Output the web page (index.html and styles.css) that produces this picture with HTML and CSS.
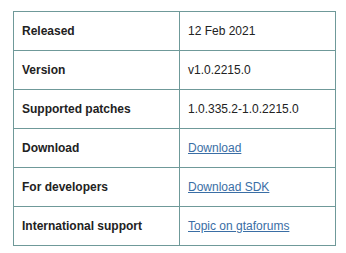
FILE: index.html
```html
<!DOCTYPE html>
<html lang="en">
<head>
    <meta charset="UTF-8">
    <title>Release info</title>
    <link rel="stylesheet" href="styles.css">
</head>
<body>
    <table class="info-table">
        <tr>
            <th>Released</th>
            <td>12 Feb 2021</td>
        </tr>
        <tr>
            <th>Version</th>
            <td>v1.0.2215.0</td>
        </tr>
        <tr>
            <th>Supported patches</th>
            <td>1.0.335.2-1.0.2215.0</td>
        </tr>
        <tr>
            <th>Download</th>
            <td><a href="#">Download</a></td>
        </tr>
        <tr>
            <th>For developers</th>
            <td><a href="#">Download SDK</a></td>
        </tr>
        <tr>
            <th>International support</th>
            <td><a href="#">Topic on gtaforums</a></td>
        </tr>
    </table>
</body>
</html>
```

FILE: styles.css
```css
* {
    margin: 0;
    padding: 0;
    box-sizing: border-box;
}

body {
    font-family: 'Liberation Sans', Arial, sans-serif;
    font-size: 12px;
    color: #222;
    background: white;
    padding: 11px 0 0 13px;
}

.info-table {
    width: 323px;
    border-collapse: collapse;
}

.info-table th,
.info-table td {
    border: 1px solid #6f9999;
    height: 39px;
    padding: 0 8px;
    text-align: left;
    vertical-align: middle;
}

.info-table th {
    width: 166px;
    font-weight: bold;
}

.info-table a {
    color: #3a6ea5;
    text-decoration: underline;
}
```
